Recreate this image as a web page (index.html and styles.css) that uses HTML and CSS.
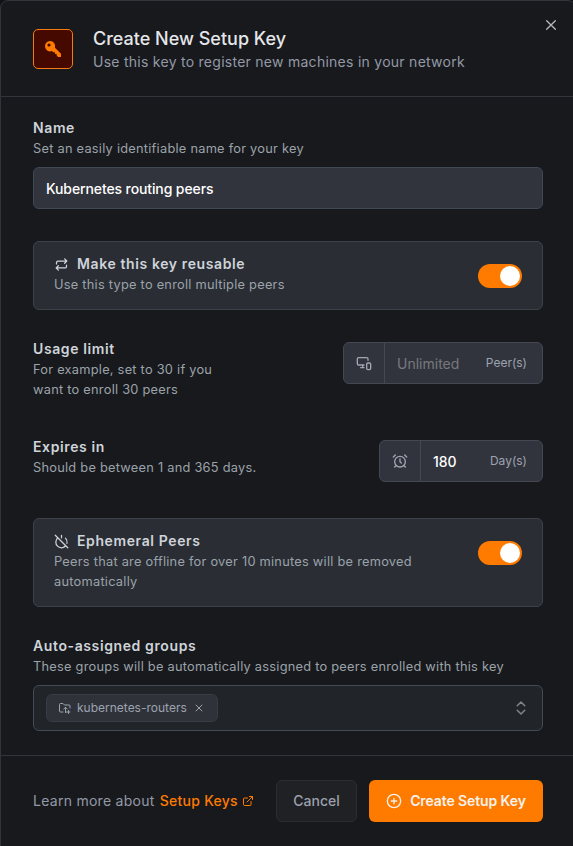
FILE: index.html
```html
<!DOCTYPE html>
<html lang="en">
<head>
<meta charset="utf-8">
<title>Create New Setup Key</title>
<link rel="stylesheet" href="styles.css">
</head>
<body>
<main class="modal">
  <header class="header">
    <div class="key-badge">
      <svg width="18" height="18" viewBox="0 0 18 18"><path fill="currentColor" fill-rule="evenodd" d="M6.200 1a5.200 5.200 0 1 0 1.700 10.100l1.500 1.100h1.600v1.700h1.700v1.700l1.300 1.300H17v-3.200l-6-6A5.200 5.200 0 0 0 6.200 1zM5 3.400a1.600 1.600 0 1 1 0 3.200 1.600 1.600 0 0 1 0-3.200z"/></svg>
    </div>
    <div>
      <h1 class="title">Create New Setup Key</h1>
      <p class="subtitle">Use this key to register new machines in your network</p>
    </div>
    <svg class="close icon" width="16" height="16" viewBox="0 0 24 24"><path d="M18.500 5.500 5.500 18.500M5.500 5.500l13 13"/></svg>
  </header>

  <section class="content">
    <div class="field">
      <h2 class="label">Name</h2>
      <p class="help">Set an easily identifiable name for your key</p>
      <div class="text-input">Kubernetes routing peers</div>
    </div>

    <div class="card">
      <div>
        <h2 class="label with-icon"><svg class="icon" width="15" height="15" viewBox="0 0 24 24"><path d="m17 3 3.500 3.500L17 10M4 11V9a2.500 2.500 0 0 1 2.500-2.500h14M7 21l-3.500-3.500L7 14M20 13v2a2.500 2.500 0 0 1-2.500 2.500h-14"/></svg>Make this key reusable</h2>
        <p class="help">Use this type to enroll multiple peers</p>
      </div>
      <div class="switch"><span class="thumb"></span></div>
    </div>

    <div class="row usage">
      <div class="row-text">
        <h2 class="label">Usage limit</h2>
        <p class="help">For example, set to 30 if you want to enroll 30 peers</p>
      </div>
      <div class="group group-wide">
        <span class="prefix"><svg class="icon" width="16" height="16" viewBox="0 0 24 24"><path d="M18 8V6a2 2 0 0 0-2-2H4a2 2 0 0 0-2 2v7a2 2 0 0 0 2 2h8M10 19v-3.960 3.150M7 19h5"/><rect x="16" y="12" width="6" height="10" rx="2"/></svg></span>
        <span class="value placeholder">Unlimited</span>
        <span class="suffix">Peer(s)</span>
      </div>
    </div>

    <div class="row expires">
      <div>
        <h2 class="label">Expires in</h2>
        <p class="help">Should be between 1 and 365 days.</p>
      </div>
      <div class="group group-narrow">
        <span class="prefix"><svg class="icon" width="16" height="16" viewBox="0 0 24 24"><circle cx="12" cy="13" r="8"/><path d="M12 9v4l2 2M5 3 2 6M22 6l-3-3M6.380 18.700 4 21M17.640 18.670 20 21"/></svg></span>
        <span class="value">180</span>
        <span class="suffix">Day(s)</span>
      </div>
    </div>

    <div class="card">
      <div class="ephemeral-text">
        <h2 class="label with-icon"><svg class="icon" width="15" height="15" viewBox="0 0 24 24"><path d="M18.360 6.640A9 9 0 0 1 20.770 15M6.160 6.160a9 9 0 1 0 12.680 12.680M12 2v4M2 2l20 20"/></svg>Ephemeral Peers</h2>
        <p class="help">Peers that are offline for over 10 minutes will be removed automatically</p>
      </div>
      <div class="switch"><span class="thumb"></span></div>
    </div>

    <div class="field groups">
      <h2 class="label">Auto-assigned groups</h2>
      <p class="help">These groups will be automatically assigned to peers enrolled with this key</p>
      <div class="select">
        <span class="chip">
          <svg class="icon" width="12" height="12" viewBox="0 0 24 24"><path d="M8 20H3a2 2 0 0 1-2-2V5a2 2 0 0 1 2-2h5l3 3h9a2 2 0 0 1 2 2v4M13 21v-10M9.500 14 13 10.500 16.500 14M13 20h9M19 17v6"/></svg>
          <span class="chip-text">kubernetes-routers</span>
          <svg class="icon chip-close" width="12" height="12" viewBox="0 0 24 24"><path d="M18 6 6 18M6 6l12 12"/></svg>
        </span>
        <svg class="icon chevrons" width="18" height="18" viewBox="0 0 24 24"><path d="m7 15 5 5 5-5M7 9l5-5 5 5"/></svg>
      </div>
    </div>
  </section>

  <footer class="footer">
    <p class="learn">Learn more about <a class="link">Setup Keys<svg class="icon" width="12" height="12" viewBox="0 0 24 24"><path d="M15 3h6v6M10 14 21 3M18 13v6a2 2 0 0 1-2 2H5a2 2 0 0 1-2-2V8a2 2 0 0 1 2-2h6"/></svg></a></p>
    <div class="actions">
      <div class="button cancel">Cancel</div>
      <div class="button primary"><svg class="icon" width="16" height="16" viewBox="0 0 24 24"><circle cx="12" cy="12" r="10"/><path d="M8 12h8M12 8v8"/></svg>Create Setup Key</div>
    </div>
  </footer>
</main>
</body>
</html>
```
FILE: styles.css
```css
* { box-sizing: border-box; }
html { overflow: hidden; background: #111214; }
body {
  margin: 0;
  height: 846px;
  overflow: hidden;
  font-family: Inter, sans-serif;
  font-size: 14px;
  line-height: 20px;
  color: #cdd2d6;
}
h1, h2, p { margin: 0; }
.icon {
  display: block;
  flex: none;
  fill: none;
  stroke: currentColor;
  stroke-width: 2;
  stroke-linecap: round;
  stroke-linejoin: round;
}
.modal {
  width: 576px;
  height: 860px;
  background: #18191d;
  border: 1px solid #32343c;
  border-radius: 8px;
}
.header {
  position: relative;
  display: flex;
  gap: 20px;
  height: 96px;
  padding: 28px 32px 0;
  border-bottom: 1px solid #32343c;
}
.key-badge {
  display: flex;
  align-items: center;
  justify-content: center;
  width: 40px;
  height: 40px;
  color: #ff7b00;
  background: #460900;
  border: 1px solid #f47a12;
  border-radius: 5px;
}
.title {
  margin-top: -2px;
  font-size: 18px;
  font-weight: 500;
  line-height: 24px;
  color: #e5e6e9;
}
.subtitle {
  font-size: 14px;
  letter-spacing: .265px;
  line-height: 22px;
  color: #9399a6;
}
.close {
  position: absolute;
  top: 16px;
  right: 16px;
  color: #b5b6b9;
}
.content { padding: 21px 32px 24px; }
.label {
  font-size: 14px;
  font-weight: 600;
  line-height: 20px;
  letter-spacing: .61px;
  color: #ced4d9;
}
.with-icon { display: flex; align-items: center; gap: 8px; }
.help {
  margin: 1px 0 -1px;
  font-size: 12.8px;
  line-height: 20px;
  letter-spacing: .25px;
  color: #9ba3aa;
}
.text-input {
  height: 42px;
  margin-top: 9px;
  padding: 0 12px;
  font-weight: 500;
  line-height: 42px;
  letter-spacing: -.11px;
  color: #fff;
  background: #32343d;
  border: 1px solid #414955;
  border-radius: 6px;
}
.card {
  display: flex;
  justify-content: space-between;
  margin-top: 32px;
  padding: 12px 20px 15px;
  background: #2a2d34;
  border: 1px solid #3d424a;
  border-radius: 6px;
}
.switch {
  display: flex;
  justify-content: flex-end;
  width: 44px;
  height: 24px;
  margin-top: 10px;
  padding: 2px;
  background: #ff7b00;
  border-radius: 12px;
}
.thumb {
  width: 20px;
  height: 20px;
  background: #fff;
  border-radius: 50%;
}
.row { display: flex; justify-content: space-between; }
.usage { margin-top: 29px; }
.usage .row-text { width: 200px; }
.usage .group { margin-top: 3px; }
.expires { margin-top: 38px; height: 49px; }
.expires .group { margin-top: 3px; }
.ephemeral-text { width: 380px; }
.groups { margin-top: 29px; }
.group {
  display: flex;
  height: 42px;
  background: #32343d;
  border: 1px solid #434853;
  border-radius: 6px;
}
.group-wide { width: 200px; }
.group-narrow { width: 164px; }
.prefix {
  display: flex;
  align-items: center;
  justify-content: center;
  width: 41px;
  border-right: 1px solid #434853;
  color: #a0a7b3;
}
.value {
  flex: 1;
  padding-left: 12px;
  font-weight: 500;
  line-height: 42px;
  color: #fff;
}
.placeholder { font-weight: 400; color: #78797e; }
.suffix {
  padding-right: 15px;
  font-size: 12px;
  line-height: 40px;
  color: #9ba3af;
}
.select {
  display: flex;
  align-items: center;
  justify-content: space-between;
  height: 46px;
  margin-top: 9px;
  padding: 0 12px;
  background: #212529;
  border: 1px solid #434a58;
  border-radius: 6px;
}
.chip {
  display: flex;
  align-items: center;
  height: 28px;
  padding: 0 12px;
  color: #9ba3af;
  background: #30323a;
  border: 1px solid #393c45;
  border-radius: 6px;
}
.chip-text { margin: 0 6px; font-size: 12px; }
.chevrons { color: #808489; }
.footer {
  display: flex;
  justify-content: space-between;
  padding: 24px 32px;
  border-top: 1px solid #32343c;
}
.learn {
  line-height: 42px;
  letter-spacing: .27px;
  color: #9399a6;
}
.link {
  display: inline-flex;
  align-items: center;
  gap: 4px;
  margin-left: 1px;
  font-weight: 500;
  letter-spacing: .25px;
  color: #ff7b00;
}
.actions { display: flex; gap: 12px; }
.button {
  display: flex;
  align-items: center;
  justify-content: center;
  gap: 8px;
  height: 42px;
  border-radius: 6px;
  font-weight: 500;
}
.cancel {
  width: 81px;
  color: #9ba0ac;
  background: #202125;
  border: 1px solid #2c2d33;
}
.primary {
  width: 174px;
  color: #f5f1eb;
  background: #ff7b00;
  font-weight: 600;
  letter-spacing: -.1px;
}
```
